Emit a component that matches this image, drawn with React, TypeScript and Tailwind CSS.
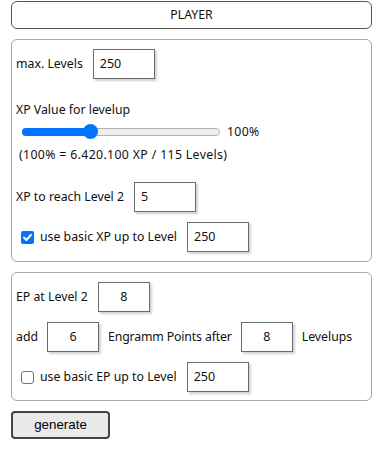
import React from "react";

const font = { fontFamily: '"Noto Sans", "Open Sans", sans-serif' };

function Box({ w, value, center }: { w: string; value: string; center?: boolean }) {
  return (
    <div
      className={`${w} h-[30px] border border-[#6b6b6b] bg-white flex items-center text-[12.5px] text-[#111] shadow-[2px_2px_2px_rgba(0,0,0,0.18)] ${
        center ? "justify-center" : "pl-[6px]"
      }`}
    >
      {value}
    </div>
  );
}

function CheckOn() {
  return (
    <div className="w-[13px] h-[13px] rounded-[2px] bg-[#0075ff] flex items-center justify-center">
      <svg width="11" height="11" viewBox="0 0 11 11">
        <path d="M2 5.6 L4.4 8 L9 2.8" fill="none" stroke="white" strokeWidth="2" strokeLinecap="round" strokeLinejoin="round" />
      </svg>
    </div>
  );
}

function CheckOff() {
  return <div className="w-[13px] h-[13px] rounded-[3px] border border-[#767676] bg-white" />;
}

export default function App() {
  return (
    <div className="w-[383px] h-[456px] bg-white px-[11px] pt-[1px] text-[12.3px] text-[#111]" style={font}>
      <div className="h-[28px] border border-[#555] rounded-[6px] flex items-center justify-center">
        PLAYER
      </div>

      <div className="mt-[10px] border border-[#a9a9a9] rounded-[6px] pl-[4px] pb-[9px]">
        <div className="mt-[9px] flex items-center h-[30px]">
          <span>max. Levels</span>
          <div className="ml-[10px]">
            <Box w="w-[62px]" value="250" />
          </div>
        </div>
        <div className="mt-[23px] h-[16px] leading-[16px]">XP Value for levelup</div>
        <div className="mt-[6px] h-[16px] flex items-center">
          <div className="ml-[6px] relative w-[198px] h-[16px]">
            <div className="absolute left-0 right-0 top-[4px] h-[8px] rounded-full bg-[#efefef] border border-[#b2b2b2]" />
            <div className="absolute left-0 w-[70px] top-[4px] h-[8px] rounded-full bg-[#0075ff]" />
            <div className="absolute left-[61px] top-[0px] w-[15px] h-[15px] rounded-full bg-[#0075ff]" />
          </div>
          <span className="ml-[7px] tracking-[0.3px]">100%</span>
        </div>
        <div className="mt-[7px] h-[16px] leading-[16px] pl-[3px] tracking-[0.35px]">(100% = 6.420.100 XP / 115 Levels)</div>
        <div className="mt-[19px] flex items-center h-[30px]">
          <span>XP to reach Level 2</span>
          <div className="ml-[10px]">
            <Box w="w-[62px]" value="5" />
          </div>
        </div>
        <div className="mt-[10px] flex items-center h-[30px]">
          <div className="ml-[5px]">
            <CheckOn />
          </div>
          <span className="ml-[6px]">use basic XP up to Level</span>
          <div className="ml-[10px]">
            <Box w="w-[62px]" value="250" />
          </div>
        </div>
      </div>

      <div className="mt-[10px] border border-[#a9a9a9] rounded-[6px] pl-[4px] pb-[8px]">
        <div className="mt-[9px] flex items-center h-[30px]">
          <span>EP at Level 2</span>
          <div className="ml-[10px]">
            <Box w="w-[52px]" value="8" center />
          </div>
        </div>
        <div className="mt-[10px] flex items-center h-[30px]">
          <span>add</span>
          <div className="ml-[9px]">
            <Box w="w-[52px]" value="6" center />
          </div>
          <span className="ml-[9px] tracking-[-0.15px]">Engramm Points after</span>
          <div className="ml-[9px]">
            <Box w="w-[52px]" value="8" center />
          </div>
          <span className="ml-[9px]">Levelups</span>
        </div>
        <div className="mt-[10px] flex items-center h-[30px]">
          <div className="ml-[5px]">
            <CheckOff />
          </div>
          <span className="ml-[6px]">use basic EP up to Level</span>
          <div className="ml-[10px]">
            <Box w="w-[62px]" value="250" />
          </div>
        </div>
      </div>

      <button
        className="mt-[10px] w-[99px] h-[28px] bg-[#e9e9e9] border-2 border-[#444] rounded-[4px] text-[13.33px] text-black flex items-center justify-center"
        style={{ fontFamily: '"Liberation Sans", Arial, sans-serif' }}
      >
        generate
      </button>
    </div>
  );
}
